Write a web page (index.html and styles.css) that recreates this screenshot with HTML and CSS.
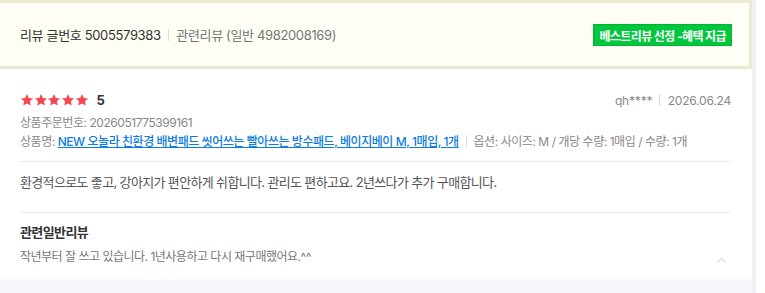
FILE: index.html
```html
<!DOCTYPE html>
<html lang="ko">
<head>
  <meta charset="UTF-8">
  <title>리뷰</title>
  <link rel="stylesheet" href="styles.css">
</head>
<body>
  <div class="page">
    <div class="main">
      <div class="best">
        <div class="best-info">
          <span class="review-no">리뷰 글번호 5005579383</span>
          <span class="bar"></span>
          <span class="related-no">관련리뷰 (일반 4982008169)</span>
        </div>
        <button class="best-btn">베스트리뷰 선정 -혜택 지급</button>
      </div>

      <div class="review">
        <div class="head">
          <div class="rating">
            <span class="stars">
              <svg viewBox="0 0 24 24"><path d="M12 1.8l3.1 6.6 7.2.9-5.3 5 1.4 7.1L12 17.9l-6.4 3.5L7 14.3l-5.3-5 7.2-.9z"/></svg>
              <svg viewBox="0 0 24 24"><path d="M12 1.8l3.1 6.6 7.2.9-5.3 5 1.4 7.1L12 17.9l-6.4 3.5L7 14.3l-5.3-5 7.2-.9z"/></svg>
              <svg viewBox="0 0 24 24"><path d="M12 1.8l3.1 6.6 7.2.9-5.3 5 1.4 7.1L12 17.9l-6.4 3.5L7 14.3l-5.3-5 7.2-.9z"/></svg>
              <svg viewBox="0 0 24 24"><path d="M12 1.8l3.1 6.6 7.2.9-5.3 5 1.4 7.1L12 17.9l-6.4 3.5L7 14.3l-5.3-5 7.2-.9z"/></svg>
              <svg viewBox="0 0 24 24"><path d="M12 1.8l3.1 6.6 7.2.9-5.3 5 1.4 7.1L12 17.9l-6.4 3.5L7 14.3l-5.3-5 7.2-.9z"/></svg>
            </span>
            <span class="score">5</span>
          </div>
          <div class="writer">
            <span>qh****</span>
            <span class="bar"></span>
            <span>2026.06.24</span>
          </div>
        </div>
        <div class="meta">상품주문번호: 2026051775399161</div>
        <div class="meta">
          상품명: <a href="#" class="product">NEW 오놀라 친환경 배변패드 씻어쓰는 빨아쓰는 방수패드, 베이지베이 M, 1매입, 1개</a>
          <span class="bar"></span>
          <span class="option">옵션: 사이즈: M / 개당 수량: 1매입 / 수량: 1개</span>
        </div>

        <div class="body">환경적으로도 좋고, 강아지가 편안하게 쉬합니다. 관리도 편하고요. 2년쓰다가 추가 구매합니다.</div>

        <div class="related">
          <div class="related-title">관련일반리뷰</div>
          <div class="related-row">
            <span class="related-text">작년부터 잘 쓰고 있습니다. 1년사용하고 다시 재구매했어요.^^</span>
            <svg class="chevron" viewBox="0 0 12 8"><path d="M1 6.5L6 1.5l5 5"/></svg>
          </div>
        </div>
      </div>
      <div class="footer"></div>
    </div>
    <div class="rail"></div>
  </div>
</body>
</html>
```

FILE: styles.css
```css
body {
  margin: 0;
  font-family: Inter, "Noto Sans CJK KR", sans-serif;
  background-color: #fff;
  color: #333;
}

.page {
  display: flex;
  height: 293px;
}

.main {
  width: 752px;
  display: flex;
  flex-direction: column;
}

.rail {
  width: 4px;
  background-color: #edf0f5;
}

.bar {
  display: inline-block;
  width: 1px;
  height: 12px;
  background-color: #dcdcdc;
  margin: 0 4px;
  vertical-align: -1px;
}

/* best review strip */
.best {
  height: 63px;
  background-color: #fefef4;
  border: 3px solid #ece9d3;
  border-left: none;
  display: flex;
  justify-content: space-between;
  align-items: center;
  padding: 0 17px 0 20px;
}

.best-info {
  font-size: 13px;
  letter-spacing: -0.35px;
}

.review-no {
  color: #333;
}

.related-no {
  color: #777;
}

.best-btn {
  background-color: #00c73c;
  color: #fff;
  border: 1px solid #06b13a;
  font-family: inherit;
  font-size: 12px;
  font-weight: 700;
  height: 22px;
  padding: 0 5px;
  margin-top: 1px;
  letter-spacing: -0.6px;
}

/* review */
.review {
  padding: 22px 21px 0 20px;
}

.head {
  display: flex;
  justify-content: space-between;
  align-items: center;
  height: 18px;
  margin-bottom: 4px;
}

.rating {
  display: flex;
  align-items: center;
}

.stars {
  display: flex;
}

.stars svg {
  width: 14px;
  height: 14px;
  fill: #f7474f;
  margin-right: -0.3px;
}

.score {
  font-size: 13px;
  font-weight: 700;
  color: #333;
  margin-left: 8px;
}

.writer {
  font-size: 12px;
  color: #888;
  letter-spacing: -0.2px;
}

.meta {
  font-size: 12px;
  line-height: 19px;
  color: #888;
  letter-spacing: -0.45px;
}

.product {
  color: #0b7de0;
  font-weight: 500;
  text-decoration: underline;
}

.option {
  color: #888;
}

.body {
  margin-top: 10px;
  border-top: 1px solid #e9ebef;
  border-bottom: 1px solid #e9ebef;
  padding: 10px 0 20px;
  font-size: 13px;
  line-height: 20px;
  color: #555;
  letter-spacing: -0.65px;
}

.related {
  padding: 10px 0 12px;
}

.related-title {
  font-size: 13px;
  font-weight: 700;
  line-height: 18px;
  color: #333;
  margin-bottom: 6px;
  letter-spacing: -0.6px;
}

.related-row {
  display: flex;
  justify-content: space-between;
  align-items: center;
  font-size: 12px;
  line-height: 20px;
  color: #777;
  letter-spacing: -0.5px;
}

.chevron {
  width: 11px;
  height: 7px;
  fill: none;
  stroke: #bbb;
  stroke-width: 1;
  margin: 6px 4px 0 0;
}

.footer {
  flex: 1;
  background-color: #f7f8fb;
}
```
